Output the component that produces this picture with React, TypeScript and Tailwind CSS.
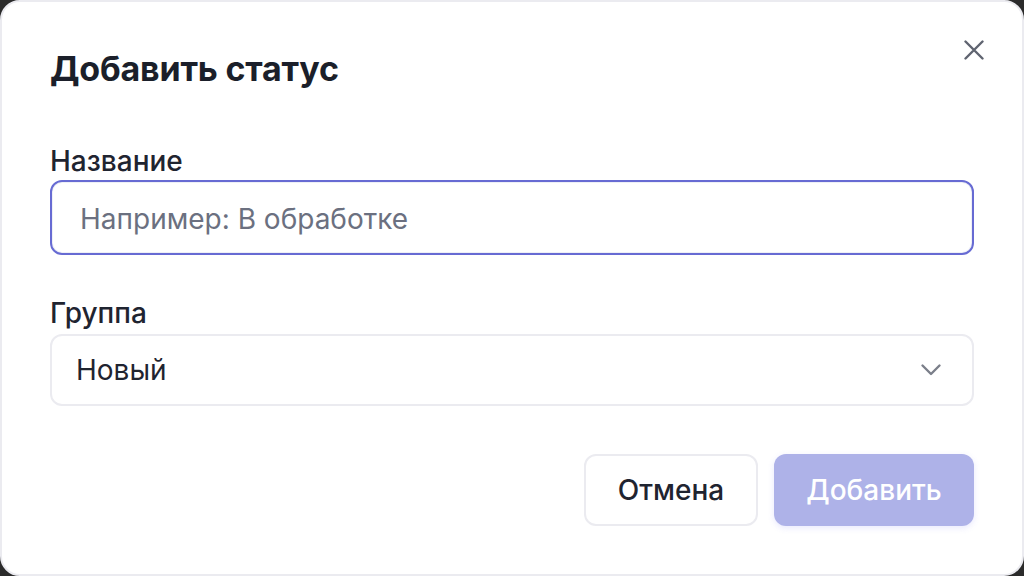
import React from 'react';

const font = { fontFamily: 'Inter, "Noto Sans", sans-serif' };

const CloseIcon: React.FC = () => (
  <svg width="20" height="20" viewBox="0 0 20 20" fill="none" stroke="currentColor" strokeWidth="2.4" strokeLinecap="round">
    <path d="M1.5 1.5L18.5 18.5M18.5 1.5L1.5 18.5" />
  </svg>
);

const Chevron: React.FC = () => (
  <svg width="22" height="14" viewBox="0 0 22 14" fill="none" stroke="currentColor" strokeWidth="2.4" strokeLinecap="round" strokeLinejoin="round">
    <path d="M2.5 2.5L11 11L19.5 2.5" />
  </svg>
);

const App: React.FC = () => {
  return (
    <div className="h-[576px] w-full bg-[#2b2b2b]" style={font}>
      {/* Modal */}
      <div className="relative flex h-full flex-col rounded-[20px] border-2 border-[#ebebf0] bg-white px-12 pt-[47px]">
        <button className="absolute right-[38px] top-[38px] text-[#5f6470]">
          <CloseIcon />
        </button>

        <h1 className="text-[34px] font-bold leading-[40px] tracking-[-0.2px] text-[#1b1f2a]">Добавить статус</h1>

        {/* Название */}
        <label className="mt-[56px] text-[28px] font-medium leading-[32px] text-[#1f2430]">Название</label>
        <div className="mt-[3px] flex h-[75px] items-center rounded-[12px] border-2 border-[#676bd3] px-[28px] pt-[2px] shadow-[inset_0_0_0_1px_#eef0f6]">
          <span className="text-[28px] text-[#6b7080]">Например: В обработке</span>
        </div>

        {/* Группа */}
        <label className="mt-[42px] text-[28px] font-medium leading-[32px] text-[#1f2430]">Группа</label>
        <div className="mt-[5px] flex h-[72px] items-center justify-between rounded-[12px] border-2 border-[#ebebf0] pl-[24px] pr-[30px]">
          <span className="text-[28px] text-[#1f2430]">Новый</span>
          <span className="text-[#7b7f8a]">
            <Chevron />
          </span>
        </div>

        {/* Buttons */}
        <div className="mt-[48px] flex justify-end gap-4">
          <button className="h-[72px] w-[174px] rounded-[12px] border-2 border-[#ebebf0] bg-white text-[28px] font-medium text-[#1f2430]">
            Отмена
          </button>
          <button className="h-[72px] w-[200px] rounded-[12px] bg-[#aeb2e8] text-[28px] font-medium text-white shadow-[0_2px_6px_rgba(99,102,241,0.15)]">
            Добавить
          </button>
        </div>
      </div>
    </div>
  );
};

export default App;
